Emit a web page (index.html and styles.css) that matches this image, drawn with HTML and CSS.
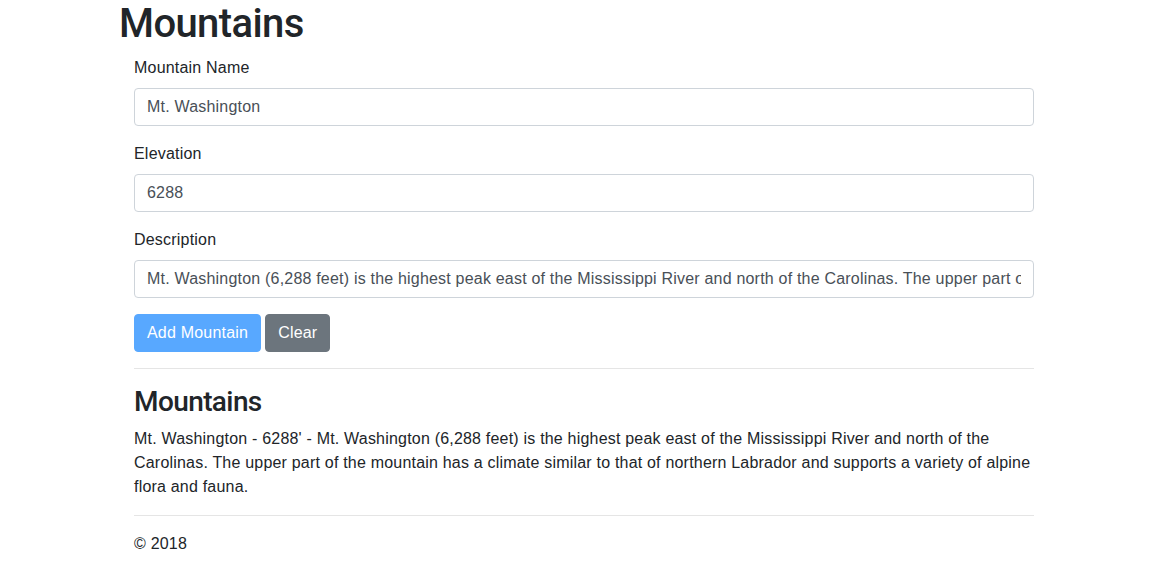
FILE: index.html
```html
<!DOCTYPE html>
<html>
<head>
<meta charset="utf-8">
<title>Mountains</title>
<link rel="stylesheet" href="styles.css">
</head>
<body>
<div class="page">
  <h1 class="title">Mountains</h1>
  <div class="content">
    <form class="form">
      <div class="form-group">
        <label class="label" for="name">Mountain Name</label>
        <input class="input" id="name" type="text" value="Mt. Washington">
      </div>
      <div class="form-group">
        <label class="label" for="elev">Elevation</label>
        <input class="input" id="elev" type="text" value="6288">
      </div>
      <div class="form-group">
        <label class="label" for="desc">Description</label>
        <input class="input" id="desc" type="text" value="Mt. Washington (6,288 feet) is the highest peak east of the Mississippi River and north of the Carolinas. The upper part of the mountain has a climate similar to that of northern Labrador and supports a variety of alpine flora and fauna.">
      </div>
      <div class="actions">
        <button type="button" class="btn btn-primary" disabled>Add Mountain</button>
        <button type="button" class="btn btn-secondary">Clear</button>
      </div>
    </form>
    <hr class="rule">
    <h3 class="subtitle">Mountains</h3>
    <p class="entry">Mt. Washington - 6288' - Mt. Washington (6,288 feet) is the highest peak east of the Mississippi River and north of the Carolinas. The upper part of the mountain has a climate similar to that of northern Labrador and supports a variety of alpine flora and fauna.</p>
    <hr class="rule">
    <footer class="footer">© 2018</footer>
  </div>
</div>
</body>
</html>
```
FILE: styles.css
```css
* { box-sizing: border-box; }
html, body {
  margin: 0;
  padding: 0;
  background: #fff;
}
body {
  font-family: "Liberation Sans", Arial, sans-serif;
  font-size: 16px;
  line-height: 24px;
  letter-spacing: 0.2px;
  color: #212529;
}
.page {
  margin-left: 116px;
  width: 918px;
}
.title {
  margin: 0 0 8px 0;
  padding-left: 3px;
  font-family: Roboto, "Liberation Sans", sans-serif;
  font-size: 40px;
  line-height: 48px;
  font-weight: 500;
  letter-spacing: -0.6px;
}
.content {
  margin-left: 18px;
  width: 900px;
}
.form { margin: 0; }
.form-group {
  display: flex;
  flex-direction: column;
  margin-bottom: 16px;
}
.label {
  display: block;
  margin-bottom: 8px;
  line-height: 24px;
}
.input {
  display: block;
  width: 100%;
  height: 38px;
  padding: 6px 12px;
  font-family: inherit;
  font-size: 16px;
  line-height: 24px;
  letter-spacing: 0.2px;
  color: #495057;
  background: #fff;
  border: 1px solid #ced4da;
  border-radius: 4px;
  outline: none;
}
.actions {
  display: flex;
  gap: 4px;
}
.btn {
  height: 38px;
  padding: 6px 12px;
  font-family: inherit;
  font-size: 16px;
  line-height: 24px;
  letter-spacing: 0.2px;
  color: #fff;
  border: 1px solid transparent;
  border-radius: 4px;
}
.btn-primary {
  background: #007bff;
  border-color: #007bff;
  opacity: 0.65;
}
.btn-secondary {
  background: #6c757d;
  border-color: #6c757d;
}
.rule {
  margin: 16px 0;
  border: 0;
  border-top: 1px solid rgba(0, 0, 0, 0.1);
  height: 0;
}
.subtitle {
  margin: 0 0 8px 0;
  font-family: Roboto, "Liberation Sans", sans-serif;
  font-size: 28px;
  line-height: 33.6px;
  font-weight: 500;
  letter-spacing: -0.6px;
}
.entry {
  margin: 0 0 16px 0;
}
.footer {
  line-height: 24px;
}
```
